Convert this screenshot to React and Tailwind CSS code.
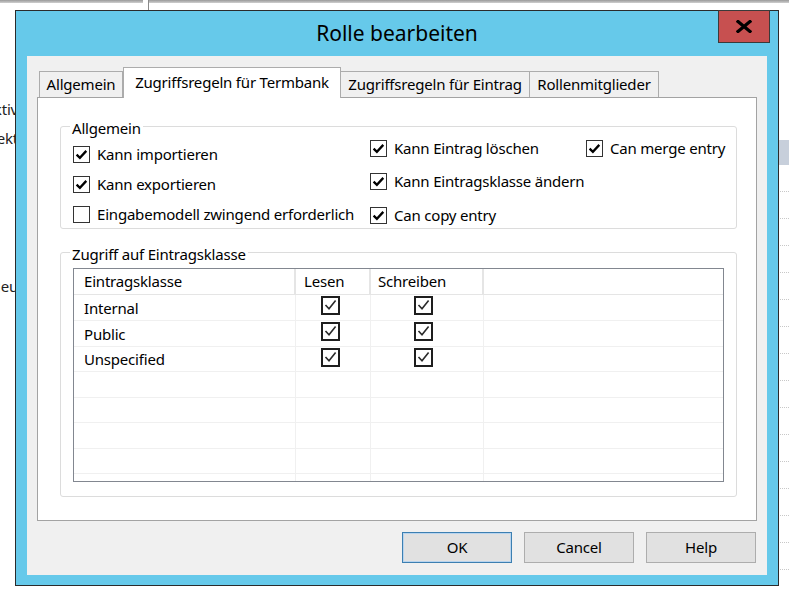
import React from "react";

// Flat Windows-style check box used in the options group
function CheckBox({ checked }) {
  return (
    <svg width="17" height="17" viewBox="0 0 17 17" className="shrink-0">
      <rect x="0.5" y="0.5" width="16" height="16" fill="#ffffff" stroke="#333333" />
      {checked && (
        <path d="M3.6 8.6 L6.9 11.9 L13.3 4.9" fill="none" stroke="#000000" strokeWidth="2.3" />
      )}
    </svg>
  );
}

// Classic check glyph drawn inside list cells
function CellCheck() {
  return (
    <svg width="19" height="19" viewBox="0 0 19 19" className="shrink-0">
      <rect x="1" y="1" width="17" height="17" fill="#ffffff" stroke="#1e1e1e" strokeWidth="2" />
      <path d="M4.5 9 L8 12.8 L14.6 4.6" fill="none" stroke="#2a2a2a" strokeWidth="1.6" />
    </svg>
  );
}

function CheckItem({ checked, label, h }) {
  return (
    <div className={`flex items-center gap-[7px] ${h}`}>
      <CheckBox checked={checked} />
      <span className="whitespace-nowrap">{label}</span>
    </div>
  );
}

const gridRows = [
  { name: "Internal", checks: true, h: "h-[26px]" },
  { name: "Public", checks: true, h: "h-[26px]" },
  { name: "Unspecified", checks: true, h: "h-[25px]" },
  { name: "", checks: false, h: "h-[26px]" },
  { name: "", checks: false, h: "h-[25px]" },
  { name: "", checks: false, h: "h-[26px]" },
  { name: "", checks: false, h: "h-[25px]" },
];

const dottedRows = Array.from({ length: 15 });

export default function App() {
  return (
    <div className="relative w-[789px] h-[589px] overflow-hidden bg-white font-['Noto_Sans',sans-serif] text-[15px] tracking-[-0.2px] text-black">
      {/* application window behind the dialog */}
      <div className="flex h-full flex-col">
        <div className="flex h-[10px] shrink-0">
          <div className="h-[3px] w-[143px] bg-gradient-to-b from-[#9a9a9a] to-[#d0d0d0]" />
          <div className="w-[5px]" />
          <div className="h-[10px] w-[1px] bg-[#8a8a8a]" />
          <div className="h-[3px] flex-1 bg-gradient-to-b from-[#9a9a9a] to-[#d0d0d0]" />
        </div>
        <div className="flex flex-1">
          <div className="flex w-[18px] flex-col overflow-hidden text-[#222222]">
            <div className="mt-[88px] flex h-[20px] justify-end">
              <span className="shrink-0 whitespace-nowrap">Aktiv</span>
            </div>
            <div className="mt-[9px] flex h-[20px] justify-end">
              <span className="shrink-0 whitespace-nowrap">Projekt</span>
            </div>
            <div className="mt-[128px] flex h-[20px] justify-end">
              <span className="shrink-0 whitespace-nowrap">Neu</span>
            </div>
          </div>
          <div className="flex flex-1 flex-col">
            <div className="mt-auto flex h-[3px] items-start overflow-hidden">
              <div className="ml-[130px] h-[3px] w-[1px] bg-[#555555]" />
              <span className="ml-[38px] -mt-[5px] text-[14px] leading-[20px] text-[#444466]">UNBEKANNTE XB</span>
            </div>
          </div>
          <div className="flex w-[11px] flex-col">
            <div className="mt-[130px] h-[25px] bg-[#c7cfdb]" />
            <div className="h-[26px]" />
            {dottedRows.map((_, i) => (
              <div key={i} className="h-[27px] border-t border-dotted border-[#c8c8c8]" />
            ))}
          </div>
        </div>
      </div>

      {/* dialog window */}
      <div className="absolute left-[15px] top-[10px] flex h-[576px] w-[764px] flex-col border border-[#2b2b2b] bg-[#66c9ea] px-[11px] pb-[10px]">
        <div className="flex h-[45px] shrink-0 items-center justify-center">
          <span className="text-[21px] leading-none tracking-normal text-black">Rolle bearbeiten</span>
        </div>
        <button className="absolute right-[8px] top-[-1px] flex h-[33px] w-[52px] items-center justify-center border border-[#3a3a3a] bg-[#c75050]">
          <svg width="16" height="13" viewBox="0 0 16 13">
            <path d="M2 1.5 L14 11.5 M14 1.5 L2 11.5" stroke="#000000" strokeWidth="3.2" strokeLinecap="square" />
          </svg>
        </button>

        <div className="flex flex-1 flex-col bg-[#f0f0f0] px-[10px] pt-[11px]">
          {/* tab strip */}
          <div className="flex h-[30px] items-end pl-[2px]">
            <div className="flex h-[26px] w-[84px] items-center justify-center border border-b-0 border-[#acacac] bg-[#f0f0f0]">
              Allgemein
            </div>
            <div className="relative z-10 -mb-px flex h-[31px] w-[218px] items-start justify-center border border-b-0 border-[#acacac] bg-white pt-[3px]">
              Zugriffsregeln für Termbank
            </div>
            <div className="flex h-[26px] w-[189px] items-center justify-center border border-b-0 border-l-0 border-[#acacac] bg-[#f0f0f0]">
              Zugriffsregeln für Eintrag
            </div>
            <div className="flex h-[26px] w-[129px] items-center justify-center border border-b-0 border-l-0 border-[#acacac] bg-[#f0f0f0]">
              Rollenmitglieder
            </div>
          </div>

          {/* tab page */}
          <div className="flex h-[424px] flex-col border border-[#a3a3a3] bg-white pl-[22px]">
            <fieldset className="mt-[16px] h-[115px] w-[677px] rounded-[3px] border border-[#dcdcdc] pl-[12px]">
              <legend className="-ml-[3px] px-[2px] pt-[4px] leading-[20px]">Allgemein</legend>
              <div className="grid grid-cols-[297px_216px_1fr]">
                <div className="flex flex-col pt-[1px]">
                  <CheckItem checked label="Kann importieren" h="h-[30px]" />
                  <CheckItem checked label="Kann exportieren" h="h-[30px]" />
                  <CheckItem checked={false} label="Eingabemodell zwingend erforderlich" h="h-[30px]" />
                </div>
                <div className="-mt-[6px] flex flex-col">
                  <CheckItem checked label="Kann Eintrag löschen" h="h-[33px]" />
                  <CheckItem checked label="Kann Eintragsklasse ändern" h="h-[33px]" />
                  <CheckItem checked label="Can copy entry" h="h-[34px]" />
                </div>
                <div className="-mt-[6px] flex flex-col">
                  <CheckItem checked label="Can merge entry" h="h-[33px]" />
                </div>
              </div>
            </fieldset>

            <fieldset className="mt-[11px] h-[257px] w-[677px] rounded-[3px] border border-[#dcdcdc] pl-[12px]">
              <legend className="-ml-[3px] px-[2px] pt-[4px] leading-[20px]">Zugriff auf Eintragsklasse</legend>
              <div className="mt-[4px] flex h-[214px] w-[651px] flex-col border border-[#828790] bg-white">
                <div className="flex h-[26px] shrink-0 border-b border-[#e5e5e5]">
                  <div className="flex w-[222px] items-center border-r-2 border-[#e5e5e5] pl-[10px]">Eintragsklasse</div>
                  <div className="flex w-[75px] items-center border-r-2 border-[#e5e5e5] pl-[8px]">Lesen</div>
                  <div className="flex w-[113px] items-center border-r-2 border-[#e5e5e5] pl-[7px]">Schreiben</div>
                  <div className="flex-1" />
                </div>
                {gridRows.map((row, i) => (
                  <div key={i} className={`flex shrink-0 border-b border-[#f0f0f0] ${row.h}`}>
                    <div className="flex w-[222px] items-center border-r border-[#f0f0f0] pl-[10px] pt-[1px]">{row.name}</div>
                    <div className="flex w-[75px] items-start border-r border-[#f0f0f0] pl-[25px] pt-[1px]">
                      {row.checks && <CellCheck />}
                    </div>
                    <div className="flex w-[113px] items-start border-r border-[#f0f0f0] pl-[43px] pt-[1px]">
                      {row.checks && <CellCheck />}
                    </div>
                    <div className="flex-1" />
                  </div>
                ))}
                <div className="flex flex-1">
                  <div className="w-[222px] border-r border-[#f0f0f0]" />
                  <div className="w-[75px] border-r border-[#f0f0f0]" />
                  <div className="w-[113px] border-r border-[#f0f0f0]" />
                  <div className="flex-1" />
                </div>
              </div>
            </fieldset>
          </div>

          {/* dialog buttons */}
          <div className="mt-[11px] flex justify-end gap-[12px] pr-[1px]">
            <button className="flex h-[31px] w-[110px] items-center justify-center border border-[#3c7fb1] bg-[#e1e1e1] shadow-[inset_0_0_0_1px_#b8d4ee]">
              OK
            </button>
            <button className="flex h-[31px] w-[110px] items-center justify-center border border-[#adadad] bg-[#e1e1e1]">
              Cancel
            </button>
            <button className="flex h-[31px] w-[110px] items-center justify-center border border-[#adadad] bg-[#e1e1e1]">
              Help
            </button>
          </div>
        </div>
      </div>
    </div>
  );
}
